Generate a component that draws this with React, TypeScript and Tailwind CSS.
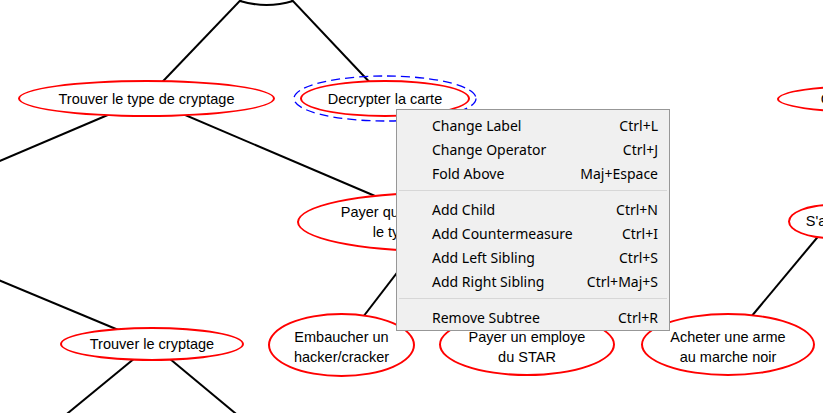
type Node = { id: string; cx: number; cy: number; rx: number; ry: number; dy?: number; lines: string[] };

const nodes: Node[] = [
  { id: "type", cx: 146.5, cy: 98.5, rx: 128.5, ry: 18.5, lines: ["Trouver le type de cryptage"] },
  { id: "decrypt", cx: 385, cy: 98.5, rx: 85, ry: 18.5, lines: ["Decrypter la carte"] },
  { id: "clone", cx: 868, cy: 98.5, rx: 91, ry: 14, lines: ["Cloner la carte"] },
  { id: "payer", cx: 434, cy: 222, rx: 137, ry: 30, lines: ["Payer quelqu'un pour trouver", "le type de cryptage"] },
  { id: "arme", cx: 831, cy: 221, rx: 43, ry: 17.5, lines: ["S'armer"] },
  { id: "crypt", cx: 152, cy: 344, rx: 92, ry: 17, lines: ["Trouver le cryptage"] },
  { id: "hacker", cx: 341.5, cy: 345, rx: 73.5, ry: 32, dy: 4, lines: ["Embaucher un", "hacker/cracker"] },
  { id: "employe", cx: 527, cy: 344.5, rx: 88, ry: 31.5, dy: 4, lines: ["Payer un employe", "du STAR"] },
  { id: "acheter", cx: 728, cy: 344.5, rx: 87, ry: 31.5, dy: 4, lines: ["Acheter une arme", "au marche noir"] },
];

// edges between node centres (some parents sit off the canvas)
const edges: [number, number, number, number][] = [
  [266.5, -27, 146.5, 98.5],
  [266.5, -27, 385, 98.5],
  [146.5, 98.5, -146, 223],
  [146.5, 98.5, 436, 222],
  [436, 222, 341.5, 345],
  [436, 222, 527, 344.5],
  [152, 344, -150, 218],
  [152, 344, -16, 482],
  [152, 344, 318, 482],
  [728, 344.5, 831, 221],
];

type Item = { label: string; keys: string } | "sep";

const menu: Item[] = [
  { label: "Change Label", keys: "Ctrl+L" },
  { label: "Change Operator", keys: "Ctrl+J" },
  { label: "Fold Above", keys: "Maj+Espace" },
  "sep",
  { label: "Add Child", keys: "Ctrl+N" },
  { label: "Add Countermeasure", keys: "Ctrl+I" },
  { label: "Add Left Sibling", keys: "Ctrl+S" },
  { label: "Add Right Sibling", keys: "Ctrl+Maj+S" },
  "sep",
  { label: "Remove Subtree", keys: "Ctrl+R" },
];

function TreeNode({ n }: { n: Node }) {
  return (
    <div
      className="absolute flex flex-col items-center justify-center rounded-[50%] border-[2.5px] border-[#ff0000] bg-white text-center text-[14.5px] leading-[20px] whitespace-nowrap text-black"
      style={{ left: n.cx - n.rx, top: n.cy - n.ry, width: n.rx * 2, height: n.ry * 2, paddingTop: n.dy ?? 0 }}
    >
      {n.lines.map((l) => (
        <span key={l}>{l}</span>
      ))}
    </div>
  );
}

export default function App() {
  return (
    <div className="relative h-[413px] w-[823px] overflow-hidden bg-white font-['Liberation_Sans',Arial,sans-serif]">
      <svg className="absolute inset-0" width={823} height={413}>
        {edges.map(([x1, y1, x2, y2], i) => (
          <line key={i} x1={x1} y1={y1} x2={x2} y2={y2} stroke="#000" strokeWidth={2} />
        ))}
        {/* AND arc under the root node */}
        <path d="M240 1 Q266.5 9 293 1" fill="none" stroke="#000" strokeWidth={2} />
      </svg>

      {nodes.map((n) => (
        <TreeNode key={n.id} n={n} />
      ))}

      {/* selection ring on "Decrypter la carte" */}
      <svg className="pointer-events-none absolute inset-0" width={823} height={413}>
        <ellipse cx={385} cy={98.5} rx={91} ry={22.5} fill="none" stroke="#0000ff" strokeWidth={1.3} strokeDasharray="9 5" />
      </svg>

      <div className="absolute left-[396px] top-[109px] w-[274px] border border-[#979797] bg-[#f0f0f0] pt-[3px] pb-[1px] font-['Noto_Sans',sans-serif] text-[14px] text-black">
        {menu.map((it, i) =>
          it === "sep" ? (
            <div key={i} className="mx-[2px] mt-[5px] mb-[6px] h-px bg-[#d7d7d7]" />
          ) : (
            <div key={i} className="flex h-[24px] items-center justify-between pl-[35px] pr-[11px]">
              <span>{it.label}</span>
              <span>{it.keys}</span>
            </div>
          )
        )}
      </div>
    </div>
  );
}
